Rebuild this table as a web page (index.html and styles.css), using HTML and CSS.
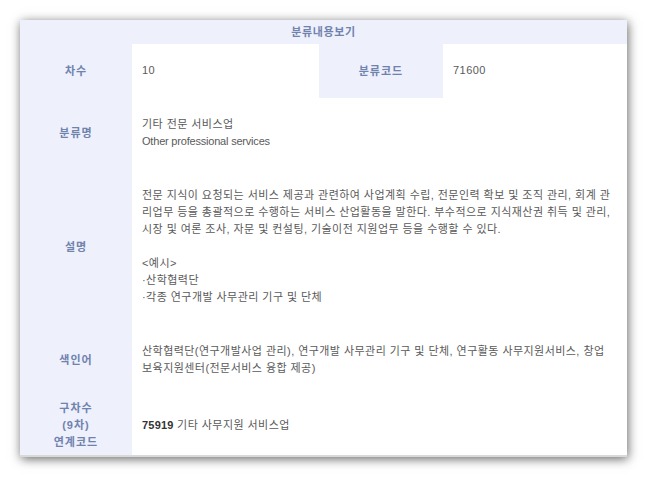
FILE: index.html
```html
<!DOCTYPE html>
<html lang="ko">
<head>
<meta charset="utf-8">
<title>분류내용보기</title>
<link rel="stylesheet" href="styles.css">
</head>
<body>
<div class="panel">
  <table class="info">
    <colgroup>
      <col class="c-label">
      <col class="c-val1">
      <col class="c-label2">
      <col class="c-val2">
    </colgroup>
    <thead>
      <tr><th colspan="4" class="title">분류내용보기</th></tr>
    </thead>
    <tbody>
      <tr>
        <th class="label">차수</th>
        <td class="val">10</td>
        <th class="label">분류코드</th>
        <td class="val">71600</td>
      </tr>
      <tr>
        <th class="label">분류명</th>
        <td class="val" colspan="3">기타 전문 서비스업<br><span class="en">Other professional services</span></td>
      </tr>
      <tr>
        <th class="label">설명</th>
        <td class="val" colspan="3">전문 지식이 요청되는 서비스 제공과 관련하여 사업계획 수립, 전문인력 확보 및 조직 관리, 회계 관<br>리업무 등을 총괄적으로 수행하는 서비스 산업활동을 말한다. 부수적으로 지식재산권 취득 및 관리,<br>시장 및 여론 조사, 자문 및 컨설팅, 기술이전 지원업무 등을 수행할 수 있다.<br><br>&lt;예시&gt;<br>·산학협력단<br>·각종 연구개발 사무관리 기구 및 단체</td>
      </tr>
      <tr>
        <th class="label">색인어</th>
        <td class="val" colspan="3">산학협력단(연구개발사업 관리), 연구개발 사무관리 기구 및 단체, 연구활동 사무지원서비스, 창업<br>보육지원센터(전문서비스 융합 제공)</td>
      </tr>
      <tr>
        <th class="label">구차수<br>(9차)<br>연계코드</th>
        <td class="val" colspan="3"><span class="code">75919</span> 기타 사무지원 서비스업</td>
      </tr>
    </tbody>
  </table>
</div>
</body>
</html>
```

FILE: styles.css
```css
html, body {
  margin: 0;
  padding: 0;
  background: #ffffff;
}

body {
  padding: 20px 20px;
  font-family: "Liberation Sans", "Noto Sans CJK KR", sans-serif;
  font-size: 11px;
  line-height: 17px;
  color: #5a5a5a;
}

.panel {
  width: 607px;
  background: #ffffff;
  box-shadow: 1px 2px 10px rgba(0, 0, 0, 0.6);
  border-bottom: 2px solid #d9d9d9;
}

.info {
  width: 100%;
  border-collapse: collapse;
  table-layout: fixed;
}

.c-label { width: 112px; }
.c-val1 { width: 187px; }
.c-label2 { width: 124px; }
.c-val2 { width: 184px; }

.title {
  background: #eef0fc;
  color: #7083ad;
  font-weight: bold;
  text-align: center;
  height: 24px;
  padding: 0;
  line-height: 24px;
  letter-spacing: 0.6px;
}

.label {
  background: #eef0fc;
  color: #7083ad;
  font-weight: bold;
  text-align: center;
  vertical-align: middle;
  padding: 4px 0;
  letter-spacing: 1px;
}

.val {
  background: #ffffff;
  text-align: left;
  vertical-align: middle;
  padding: 18px 4px 19px 10px;
  white-space: nowrap;
  letter-spacing: 0.45px;
}

.en {
  letter-spacing: -0.2px;
}

.code {
  color: #333333;
  font-weight: bold;
  letter-spacing: 0.2px;
}
```
